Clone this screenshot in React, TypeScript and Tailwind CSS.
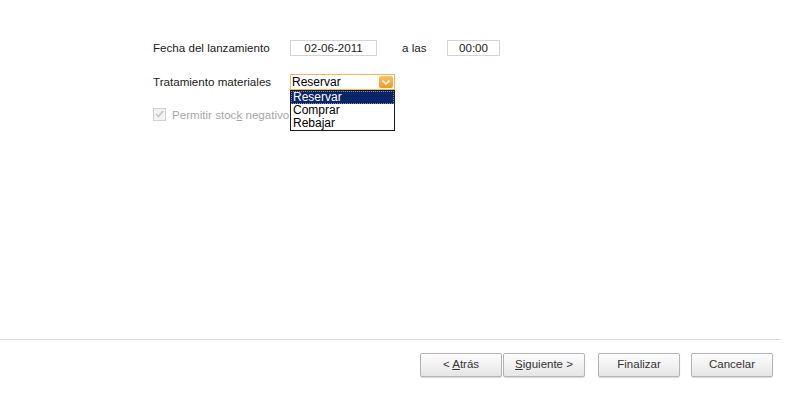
import { useState } from "react";

const options = ["Reservar", "Comprar", "Rebajar"];

function WizButton({ children, className = "" }: { children: React.ReactNode; className?: string }) {
  return (
    <button
      className={
        "h-[24px] w-[82px] rounded-[2px] border border-[#b4b4b4] bg-gradient-to-b from-[#fdfdfd] to-[#e6e6e6] text-[11.5px] text-[#333] shadow-[0_1px_1px_rgba(0,0,0,0.15)] " +
        className
      }
    >
      {children}
    </button>
  );
}

export default function App() {
  const [selected] = useState("Reservar");

  return (
    <div
      className="flex h-[396px] w-[810px] flex-col bg-white text-[11.6px] text-[#222]"
      style={{ fontFamily: '"Liberation Sans", Arial, sans-serif' }}
    >
      {/* Form */}
      <div className="flex flex-col pl-[153px] pt-[39px]">
        <div className="flex items-center">
          <span className="w-[137px]">Fecha del lanzamiento</span>
          <div className="flex h-[16px] w-[87px] items-center justify-center border border-[#d4d4d4] bg-white">
            02-06-2011
          </div>
          <span className="ml-[25px] w-[45px]">a las</span>
          <div className="flex h-[16px] w-[53px] items-center justify-center border border-[#d4d4d4] bg-white">
            00:00
          </div>
        </div>

        <div className="mt-[17px] flex items-center">
          <span className="w-[137px]">Tratamiento materiales</span>
          <div className="relative">
            <div className="flex h-[16px] w-[105px] items-center justify-between border border-[#e8b868] bg-white pl-[1px] pr-[1px] text-[12px] text-black">
              <span>{selected}</span>
              <span className="flex h-[12px] w-[14px] items-center justify-center rounded-[2px] bg-gradient-to-b from-[#fbc060] to-[#f29a1a]">
                <svg width="8" height="5" viewBox="0 0 8 5">
                  <path d="M0.5 0.5 L4 4 L7.5 0.5" fill="none" stroke="#fff" strokeWidth="1.6" />
                </svg>
              </span>
            </div>
            <ul className="absolute left-0 top-[16px] z-10 w-[105px] border border-[#1a1a1a] bg-white text-[12px] leading-[11px] text-black">
              {options.map((o) => (
                <li
                  key={o}
                  className={
                    o === "Reservar"
                      ? "border border-dotted border-[#8a8a8a] bg-[#0a246a] pl-[1px] text-white"
                      : "border border-transparent pl-[1px]"
                  }
                >
                  {o}
                </li>
              ))}
            </ul>
          </div>
        </div>

        <div className="mt-[15px] flex items-center gap-[6px] text-[#a8a8a8]">
          <span className="flex h-[13px] w-[13px] items-center justify-center border border-[#d0d0d0] bg-[#f2f2f2]">
            <svg width="9" height="8" viewBox="0 0 9 8">
              <path d="M1 4 L3.5 6.5 L8 1" fill="none" stroke="#c4c4c4" strokeWidth="1.6" />
            </svg>
          </span>
          <span>
            Permitir stoc<span className="underline">k</span> negativo en los stocks
          </span>
        </div>
      </div>

      <div className="flex-1" />

      {/* Footer */}
      <div className="h-[1px] w-[781px] bg-[#dcdcdc]" />
      <div className="flex pb-[19px] pl-[420px] pt-[13px]">
        <WizButton>
          &lt; <span className="underline">A</span>trás
        </WizButton>
        <WizButton className="ml-[1px] from-[#f4f4f4] to-[#dcdcdc]">
          <span className="underline">S</span>iguiente &gt;
        </WizButton>
        <WizButton className="ml-[13px]">Finalizar</WizButton>
        <WizButton className="ml-[11px]">Cancelar</WizButton>
      </div>
    </div>
  );
}
